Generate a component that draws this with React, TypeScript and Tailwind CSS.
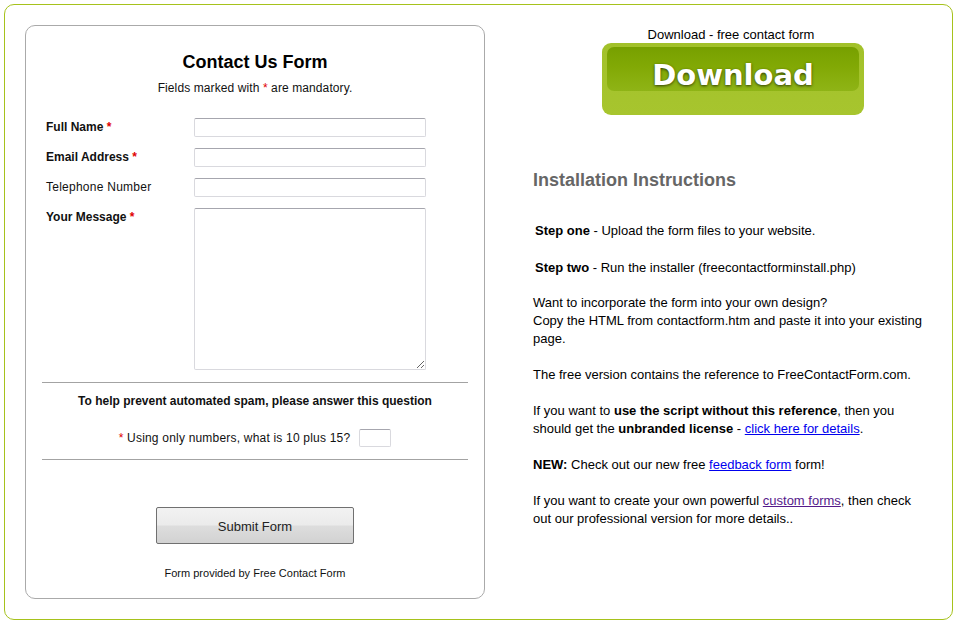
import React from "react";

const Star = () => <span className="text-[#e00000]">*</span>;

export default function App() {
  const font = { fontFamily: '"Liberation Sans", Arial, sans-serif' };
  return (
    <div className="w-[956px] h-[628px] bg-white pt-[4px] pl-[4px]" style={font}>
      <div className="w-[949px] h-[616px] border border-[#a6c21c] rounded-[10px] pt-[20px] pl-[20px] flex items-start text-[#111]">
        {/* Form panel */}
        <div className="w-[460px] h-[574px] border border-[#aaaaaa] rounded-[10px] flex flex-col items-center pt-[25px]">
          <div className="text-[18px] font-bold leading-[22px] text-black">Contact Us Form</div>
          <div className="mt-[7px] text-[12px] leading-[16px] tracking-[0.1px]">
            Fields marked with <Star /> are mandatory.
          </div>
          <div className="mt-[22px] self-stretch px-[20px] flex flex-col gap-[11px]">
            <div className="flex items-start">
              <label className="w-[148px] text-[12px] leading-[19px] font-bold">Full Name <Star /></label>
              <input className="w-[232px] h-[19px] border border-[#d9d9de] border-t-[#a6a6ae] rounded-[2px] bg-white outline-none" />
            </div>
            <div className="flex items-start">
              <label className="w-[148px] text-[12px] leading-[19px] font-bold">Email Address <Star /></label>
              <input className="w-[232px] h-[19px] border border-[#d9d9de] border-t-[#a6a6ae] rounded-[2px] bg-white outline-none" />
            </div>
            <div className="flex items-start">
              <label className="w-[148px] text-[12px] leading-[19px] tracking-[0.25px]">Telephone Number</label>
              <input className="w-[232px] h-[19px] border border-[#d9d9de] border-t-[#a6a6ae] rounded-[2px] bg-white outline-none" />
            </div>
            <div className="flex items-start">
              <label className="w-[148px] text-[12px] leading-[19px] font-bold">Your Message <Star /></label>
              <textarea className="w-[232px] h-[162px] border border-[#d9d9de] border-t-[#a6a6ae] rounded-[2px] bg-white outline-none block" />
            </div>
          </div>
          <div className="mt-[12px] self-stretch mx-[16px] h-px bg-[#a3a3a3]" />
          <div className="mt-[10px] text-[12px] leading-[16px] font-bold">
            To help prevent automated spam, please answer this question
          </div>
          <div className="mt-[20px] flex items-center">
            <span className="text-[12px] leading-[16px] tracking-[0.2px]">
              <Star /> Using only numbers, what is 10 plus 15?
            </span>
            <input className="ml-[9px] w-[32px] h-[18px] border border-[#d9d9de] border-t-[#a6a6ae] rounded-[2px] bg-white outline-none" />
          </div>
          <div className="mt-[12px] self-stretch mx-[16px] h-px bg-[#a3a3a3]" />
          <button className="mt-[47px] w-[198px] h-[37px] pt-[3px] border border-[#707070] rounded-[2px] bg-[linear-gradient(to_bottom,#f2f2f2_0%,#ebebeb_48%,#dddddd_52%,#d2d2d2_100%)] text-[13px] text-[#222]" style={font}>
            Submit Form
          </button>
          <div className="mt-[22px] text-[11px] leading-[14px]">Form provided by Free Contact Form</div>
        </div>

        {/* Right column */}
        <div className="ml-[48px] mt-[1px] w-[398px] flex flex-col text-black">
          <div className="text-center text-[13px] leading-[16px] pt-[1px] pr-[2px]">Download - free contact form</div>
          <div className="self-center ml-[2px] w-[262px] h-[72px] rounded-[9px] bg-[linear-gradient(to_bottom,#a2c12a,#a7c52e)] grid">
            <div className="[grid-area:1/1] pt-[4px] px-[5px]">
              <div className="h-[44px] rounded-[7px] bg-[linear-gradient(to_bottom,#77a000_0%,#82a905_45%,#8fb416_100%)]" />
            </div>
            <div
              className="[grid-area:1/1] pt-[15px] text-center text-white font-bold text-[29px] leading-[34px] [text-shadow:0_1px_3px_rgba(0,0,0,0.65)]"
              style={{ fontFamily: '"DejaVu Sans", Verdana, sans-serif' }}
            >
              Download
            </div>
          </div>
          <div className="mt-[54px] text-[18px] font-bold leading-[22px] text-[#666666]">Installation Instructions</div>
          <div className="mt-[31px] text-[13px] leading-[18px]">
            <p className="ml-[2px]"><b>Step one</b> - Upload the form files to your website.</p>
            <p className="ml-[2px] mt-[19px]"><b>Step two</b> - Run the installer (freecontactforminstall.php)</p>
            <p className="mt-[17px]">
              Want to incorporate the form into your own design?
              <br />
              Copy the HTML from contactform.htm and paste it into your existing page.
            </p>
            <p className="mt-[18px]">The free version contains the reference to FreeContactForm.com.</p>
            <p className="mt-[18px]">
              If you want to <b>use the script without this reference</b>, then you should get the <b>unbranded license</b> -{" "}
              <a className="text-[#0000ee] underline" href="#">click here for details</a>.
            </p>
            <p className="mt-[18px]">
              <b>NEW:</b> Check out our new free <a className="text-[#0000ee] underline" href="#">feedback form</a> form!
            </p>
            <p className="mt-[18px]">
              If you want to create your own powerful <a className="text-[#551a8b] underline" href="#">custom forms</a>, then check out our professional version for more details..
            </p>
          </div>
        </div>
      </div>
    </div>
  );
}
